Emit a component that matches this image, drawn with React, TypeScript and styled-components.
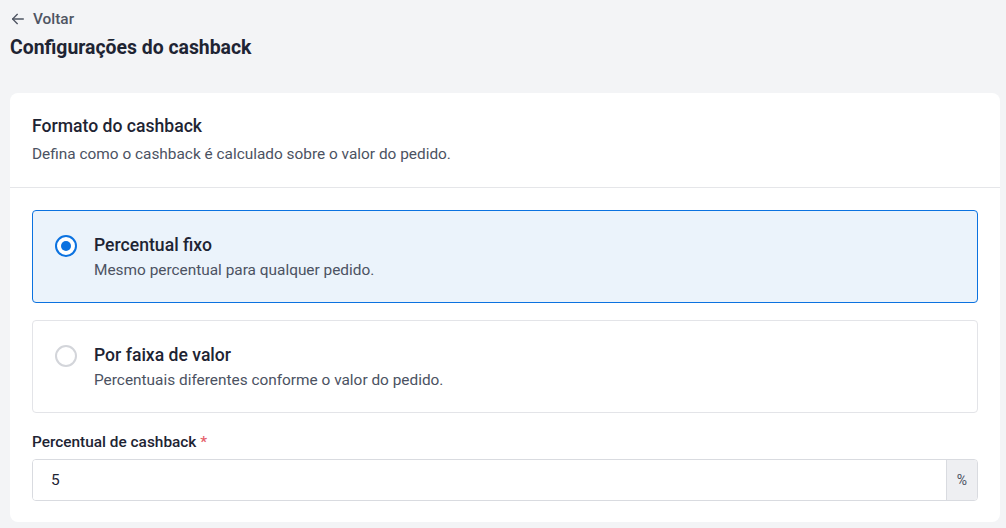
import * as React from 'react';
import styled, { createGlobalStyle } from 'styled-components';

type Format = 'fixed' | 'range';

const options: { id: Format; title: string; description: string }[] = [
	{
		id: 'fixed',
		title: 'Percentual fixo',
		description: 'Mesmo percentual para qualquer pedido.',
	},
	{
		id: 'range',
		title: 'Por faixa de valor',
		description: 'Percentuais diferentes conforme o valor do pedido.',
	},
];

const App = () => {
	const [format, setFormat] = React.useState<Format>('fixed');
	const [percent, setPercent] = React.useState('5');

	return (
		<Root>
			<GlobalStyle />
			<BackLink href="#">
				<svg width="16" height="16" viewBox="0 0 24 24" fill="none" stroke="currentColor" strokeWidth="2" strokeLinecap="round" strokeLinejoin="round">
					<path d="M20 12H4" />
					<path d="M11 19l-7-7 7-7" />
				</svg>
				Voltar
			</BackLink>
			<PageTitle>Configurações do cashback</PageTitle>

			<Card>
				<CardHeader>
					<CardTitle>Formato do cashback</CardTitle>
					<CardText>Defina como o cashback é calculado sobre o valor do pedido.</CardText>
				</CardHeader>
				<CardBody>
					<OptionList>
						{options.map(opt => (
							<Option key={opt.id} $active={format === opt.id}>
								<input
									type="radio"
									name="cashback-format"
									value={opt.id}
									checked={format === opt.id}
									onChange={() => setFormat(opt.id)}
								/>
								<OptionRow>
									<Radio $active={format === opt.id} />
									<OptionText>
										<OptionTitle>{opt.title}</OptionTitle>
										<OptionDescription>{opt.description}</OptionDescription>
									</OptionText>
								</OptionRow>
							</Option>
						))}
					</OptionList>

					<Field>
						<Label>
							Percentual de cashback <Required>*</Required>
						</Label>
						<InputGroup>
							<Input value={percent} onChange={e => setPercent(e.target.value)} />
							<Addon>%</Addon>
						</InputGroup>
					</Field>
				</CardBody>
			</Card>
		</Root>
	);
};

export default App;

const textDark = '#1e2433';
const textMuted = '#4b5262';
const blue = '#0b72e0';
const border = '#d9dbe0';

const GlobalStyle = createGlobalStyle`
	body {
		margin: 0;
		background: #f3f4f6;
		font-family: Roboto, 'Noto Sans', Arial, sans-serif;
		color: ${textDark};
	}
	* {
		box-sizing: border-box;
	}
`;

const Root = styled.div`
	padding: 10px 6px 6px 10px;
	min-height: 528px;
`;

const BackLink = styled.a`
	display: inline-flex;
	align-items: center;
	gap: 7px;
	height: 18px;
	font-size: 15.4px;
	font-weight: 500;
	color: #4f5563;
	text-decoration: none;
`;

const PageTitle = styled.h1`
	margin: 4px 0 0;
	font-size: 19.4px;
	line-height: 26px;
	font-weight: 700;
	color: ${textDark};
`;

const Card = styled.section`
	margin-top: 32px;
	background: #fff;
	border-radius: 8px;
`;

const CardHeader = styled.div`
	padding: 21px 22px 23px;
	border-bottom: 1px solid #e5e6e9;
`;

const CardTitle = styled.h2`
	margin: 0;
	font-size: 17.6px;
	line-height: 24px;
	font-weight: 500;
	color: ${textDark};
`;

const CardText = styled.p`
	margin: 6px 0 0;
	font-size: 15.4px;
	line-height: 20px;
	color: ${textMuted};
`;

const CardBody = styled.div`
	padding: 22px 22px 21px;
`;

const OptionList = styled.div`
	display: flex;
	flex-direction: column;
	gap: 17px;
`;

const Option = styled.label<{ $active: boolean }>`
	display: flex;
	align-items: center;
	height: 93px;
	padding: 0 22px;
	border: 1px solid ${p => (p.$active ? blue : '#e3e4e8')};
	border-radius: 4px;
	background: ${p => (p.$active ? '#ebf3fb' : '#fff')};
	cursor: pointer;

	input {
		display: none;
	}
`;

const OptionRow = styled.div`
	display: flex;
	align-items: flex-start;
	gap: 17px;
`;

const Radio = styled.span<{ $active: boolean }>`
	flex: none;
	margin-top: 1px;
	width: 22px;
	height: 22px;
	border-radius: 50%;
	border: 2px solid ${p => (p.$active ? blue : '#d3d5da')};
	background: #fff;
	display: flex;
	align-items: center;
	justify-content: center;

	&::after {
		content: '';
		width: 10px;
		height: 10px;
		border-radius: 50%;
		background: ${blue};
		display: ${p => (p.$active ? 'block' : 'none')};
	}
`;

const OptionText = styled.div`
	display: flex;
	flex-direction: column;
	gap: 4px;
`;

const OptionTitle = styled.span`
	font-size: 17.6px;
	line-height: 22px;
	font-weight: 500;
	color: ${textDark};
`;

const OptionDescription = styled.span`
	font-size: 15.4px;
	line-height: 20px;
	color: ${textMuted};
`;

const Field = styled.div`
	margin-top: 19px;
`;

const Label = styled.div`
	font-size: 15.4px;
	line-height: 20px;
	font-weight: 500;
	color: ${textDark};
`;

const Required = styled.span`
	color: #e5606a;
`;

const InputGroup = styled.div`
	display: flex;
	margin-top: 7px;
	height: 42px;
	border: 1px solid ${border};
	border-radius: 4px;
	overflow: hidden;
`;

const Input = styled.input`
	flex: 1;
	min-width: 0;
	border: 0;
	outline: 0;
	padding: 0 18px;
	font-family: inherit;
	font-size: 15.4px;
	color: ${textDark};
	background: #fff;
`;

const Addon = styled.span`
	display: flex;
	align-items: center;
	justify-content: center;
	width: 31px;
	border-left: 1px solid ${border};
	background: #eeeff2;
	font-size: 14px;
	color: #4b5262;
`;
